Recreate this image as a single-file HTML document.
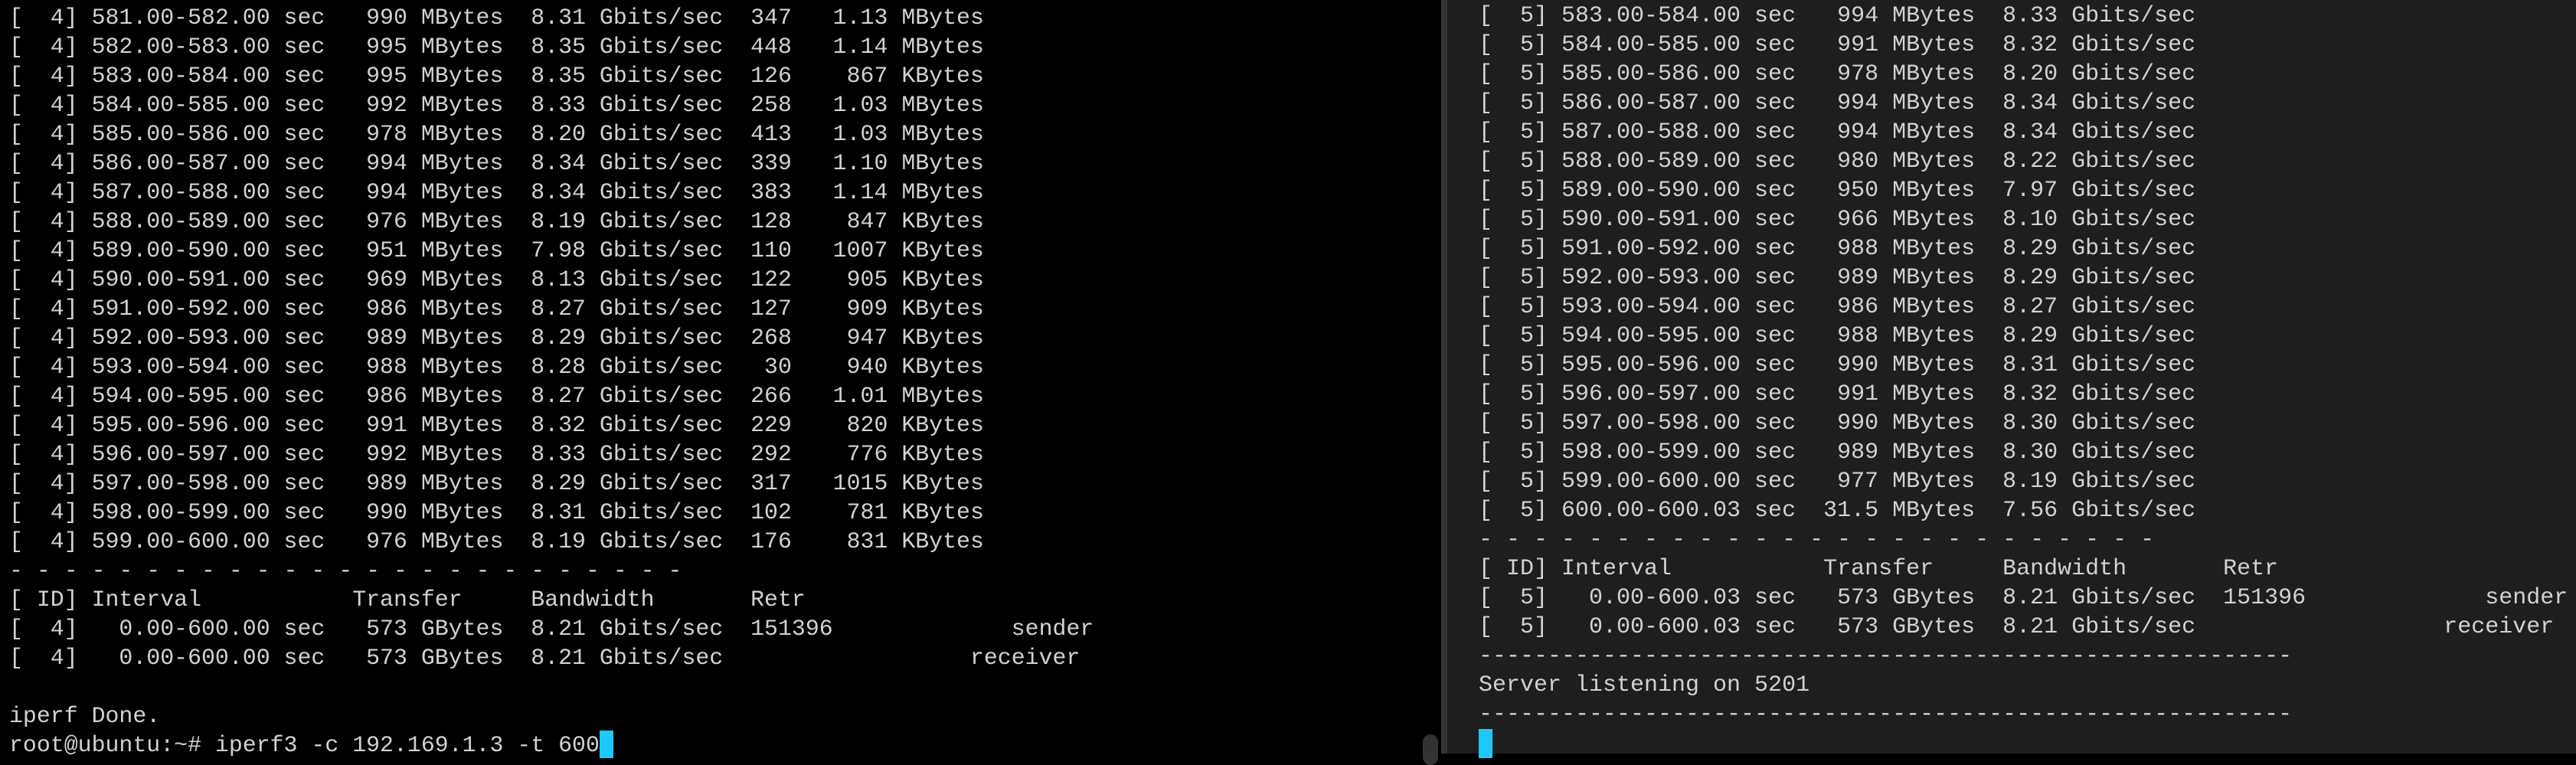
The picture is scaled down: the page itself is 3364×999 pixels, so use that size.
<!DOCTYPE html>
<html><head><meta charset="utf-8"><style>
html,body{margin:0;padding:0;}
body{width:3364px;height:984px;overflow:hidden;position:relative;background:#000;}
#left{position:absolute;left:0;top:0;width:1882px;height:984px;background:#000;}
#bar{position:absolute;left:1882px;top:0;width:8px;height:984px;background:#333;}
#right{position:absolute;left:1890px;top:0;width:1474px;height:984px;background:#1e1e1e;}
pre{margin:0;position:absolute;font-family:"Liberation Mono","DejaVu Sans Mono",monospace;color:#d2d2d2;white-space:pre;}
#lt{left:12px;top:4px;font-size:29.88px;line-height:38px;}
#rt{left:41px;top:2px;font-size:30px;line-height:38px;}
.cur{display:inline-block;background:#1ec8ff;width:17.9px;height:36px;vertical-align:top;}
#thumb{position:absolute;left:1858px;top:959px;width:20px;height:40px;border-radius:10px;background:#333;}
</style></head><body>
<div id="left"><pre id="lt">[  4] 581.00-582.00 sec   990 MBytes  8.31 Gbits/sec  347   1.13 MBytes
[  4] 582.00-583.00 sec   995 MBytes  8.35 Gbits/sec  448   1.14 MBytes
[  4] 583.00-584.00 sec   995 MBytes  8.35 Gbits/sec  126    867 KBytes
[  4] 584.00-585.00 sec   992 MBytes  8.33 Gbits/sec  258   1.03 MBytes
[  4] 585.00-586.00 sec   978 MBytes  8.20 Gbits/sec  413   1.03 MBytes
[  4] 586.00-587.00 sec   994 MBytes  8.34 Gbits/sec  339   1.10 MBytes
[  4] 587.00-588.00 sec   994 MBytes  8.34 Gbits/sec  383   1.14 MBytes
[  4] 588.00-589.00 sec   976 MBytes  8.19 Gbits/sec  128    847 KBytes
[  4] 589.00-590.00 sec   951 MBytes  7.98 Gbits/sec  110   1007 KBytes
[  4] 590.00-591.00 sec   969 MBytes  8.13 Gbits/sec  122    905 KBytes
[  4] 591.00-592.00 sec   986 MBytes  8.27 Gbits/sec  127    909 KBytes
[  4] 592.00-593.00 sec   989 MBytes  8.29 Gbits/sec  268    947 KBytes
[  4] 593.00-594.00 sec   988 MBytes  8.28 Gbits/sec   30    940 KBytes
[  4] 594.00-595.00 sec   986 MBytes  8.27 Gbits/sec  266   1.01 MBytes
[  4] 595.00-596.00 sec   991 MBytes  8.32 Gbits/sec  229    820 KBytes
[  4] 596.00-597.00 sec   992 MBytes  8.33 Gbits/sec  292    776 KBytes
[  4] 597.00-598.00 sec   989 MBytes  8.29 Gbits/sec  317   1015 KBytes
[  4] 598.00-599.00 sec   990 MBytes  8.31 Gbits/sec  102    781 KBytes
[  4] 599.00-600.00 sec   976 MBytes  8.19 Gbits/sec  176    831 KBytes
- - - - - - - - - - - - - - - - - - - - - - - - -
[ ID] Interval           Transfer     Bandwidth       Retr
[  4]   0.00-600.00 sec   573 GBytes  8.21 Gbits/sec  151396             sender
[  4]   0.00-600.00 sec   573 GBytes  8.21 Gbits/sec                  receiver

iperf Done.
root@ubuntu:~# iperf3 -c 192.169.1.3 -t 600<span class="cur"></span></pre>
<div id="thumb"></div></div>
<div id="bar"></div>
<div id="right"><pre id="rt">[  5] 583.00-584.00 sec   994 MBytes  8.33 Gbits/sec
[  5] 584.00-585.00 sec   991 MBytes  8.32 Gbits/sec
[  5] 585.00-586.00 sec   978 MBytes  8.20 Gbits/sec
[  5] 586.00-587.00 sec   994 MBytes  8.34 Gbits/sec
[  5] 587.00-588.00 sec   994 MBytes  8.34 Gbits/sec
[  5] 588.00-589.00 sec   980 MBytes  8.22 Gbits/sec
[  5] 589.00-590.00 sec   950 MBytes  7.97 Gbits/sec
[  5] 590.00-591.00 sec   966 MBytes  8.10 Gbits/sec
[  5] 591.00-592.00 sec   988 MBytes  8.29 Gbits/sec
[  5] 592.00-593.00 sec   989 MBytes  8.29 Gbits/sec
[  5] 593.00-594.00 sec   986 MBytes  8.27 Gbits/sec
[  5] 594.00-595.00 sec   988 MBytes  8.29 Gbits/sec
[  5] 595.00-596.00 sec   990 MBytes  8.31 Gbits/sec
[  5] 596.00-597.00 sec   991 MBytes  8.32 Gbits/sec
[  5] 597.00-598.00 sec   990 MBytes  8.30 Gbits/sec
[  5] 598.00-599.00 sec   989 MBytes  8.30 Gbits/sec
[  5] 599.00-600.00 sec   977 MBytes  8.19 Gbits/sec
[  5] 600.00-600.03 sec  31.5 MBytes  7.56 Gbits/sec
- - - - - - - - - - - - - - - - - - - - - - - - -
[ ID] Interval           Transfer     Bandwidth       Retr
[  5]   0.00-600.03 sec   573 GBytes  8.21 Gbits/sec  151396             sender
[  5]   0.00-600.03 sec   573 GBytes  8.21 Gbits/sec                  receiver
-----------------------------------------------------------
Server listening on 5201
-----------------------------------------------------------
<span class="cur" style="width:18px;height:38px"></span></pre></div>
</body></html>
